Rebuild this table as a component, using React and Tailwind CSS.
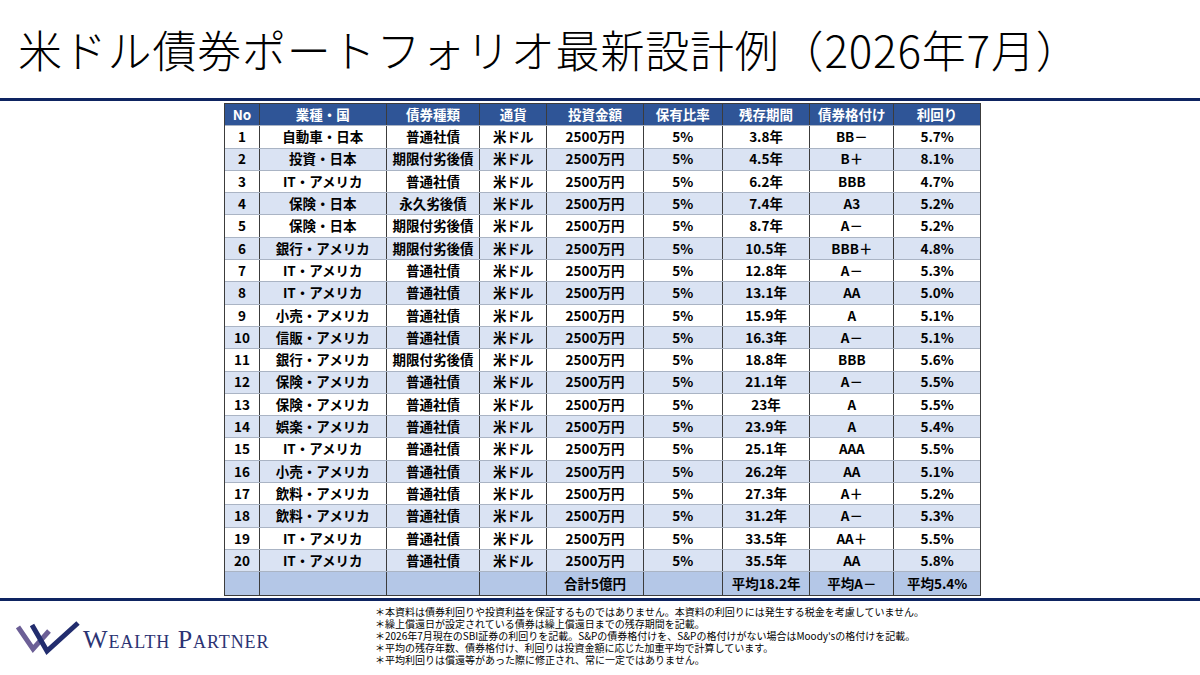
const rows = [
  ["1", "自動車・日本", "普通社債", "3.8年", "BB－", "5.7%"],
  ["2", "投資・日本", "期限付劣後債", "4.5年", "B＋", "8.1%"],
  ["3", "IT・アメリカ", "普通社債", "6.2年", "BBB", "4.7%"],
  ["4", "保険・日本", "永久劣後債", "7.4年", "A3", "5.2%"],
  ["5", "保険・日本", "期限付劣後債", "8.7年", "A－", "5.2%"],
  ["6", "銀行・アメリカ", "期限付劣後債", "10.5年", "BBB＋", "4.8%"],
  ["7", "IT・アメリカ", "普通社債", "12.8年", "A－", "5.3%"],
  ["8", "IT・アメリカ", "普通社債", "13.1年", "AA", "5.0%"],
  ["9", "小売・アメリカ", "普通社債", "15.9年", "A", "5.1%"],
  ["10", "信販・アメリカ", "普通社債", "16.3年", "A－", "5.1%"],
  ["11", "銀行・アメリカ", "期限付劣後債", "18.8年", "BBB", "5.6%"],
  ["12", "保険・アメリカ", "普通社債", "21.1年", "A－", "5.5%"],
  ["13", "保険・アメリカ", "普通社債", "23年", "A", "5.5%"],
  ["14", "娯楽・アメリカ", "普通社債", "23.9年", "A", "5.4%"],
  ["15", "IT・アメリカ", "普通社債", "25.1年", "AAA", "5.5%"],
  ["16", "小売・アメリカ", "普通社債", "26.2年", "AA", "5.1%"],
  ["17", "飲料・アメリカ", "普通社債", "27.3年", "A＋", "5.2%"],
  ["18", "飲料・アメリカ", "普通社債", "31.2年", "A－", "5.3%"],
  ["19", "IT・アメリカ", "普通社債", "33.5年", "AA＋", "5.5%"],
  ["20", "IT・アメリカ", "普通社債", "35.5年", "AA", "5.8%"],
];

const widths = ["w-[35px]", "w-[127px]", "w-[94px]", "w-[67px]", "w-[97px]", "w-[79px]", "w-[88px]", "w-[84px]", "w-[86px]"];
const heads = ["No", "業種・国", "債券種類", "通貨", "投資金額", "保有比率", "残存期間", "債券格付け", "利回り"];

const notes = [
  "＊本資料は債券利回りや投資利益を保証するものではありません。本資料の利回りには発生する税金を考慮していません。",
  "＊繰上償還日が設定されている債券は繰上償還日までの残存期間を記載。",
  "＊2026年7月現在のSBI証券の利回りを記載。S&Pの債券格付けを、S&Pの格付けがない場合はMoody'sの格付けを記載。",
  "＊平均の残存年数、債券格付け、利回りは投資金額に応じた加重平均で計算しています。",
  "＊平均利回りは償還等があった際に修正され、常に一定ではありません。",
];

function Row({ cells, className }) {
  return (
    <div className={`flex h-[22.3px] border-b border-[#aab4c4] ${className}`}>
      {cells.map((c, i) => (
        <div
          key={i}
          className={`${widths[i]} flex items-center justify-center ${i < cells.length - 1 ? "border-r border-[#3c3c3c]" : ""}`}
        >
          {c}
        </div>
      ))}
    </div>
  );
}

function Logo() {
  return (
    <div className="flex items-center gap-[3px]">
      <svg width="64" height="34" viewBox="0 0 64 34">
        <polyline points="2,6 17,28 33,10" fill="none" stroke="#6c5f96" strokeWidth="5" strokeLinejoin="miter" />
        <polyline points="16,4 31,30 62,2" fill="none" stroke="#222d6e" strokeWidth="5" strokeLinejoin="miter" />
      </svg>
      <div className="text-[#2c3373] text-[26px] leading-none tracking-[0.9px] mt-[4px]" style={{ fontFamily: '"Liberation Serif", serif', fontVariant: "small-caps" }}>
        Wealth Partner
      </div>
    </div>
  );
}

export default function App() {
  return (
    <div className="w-[1200px] h-[675px] bg-white overflow-hidden" style={{ fontFamily: '"Noto Sans CJK JP", "Noto Sans", sans-serif' }}>
      <div className="h-[98px] flex items-center pl-[18px]">
        <h1 className="text-[44px] font-light text-black tracking-[0.8px]">米ドル債券ポートフォリオ最新設計例（2026年7月）</h1>
      </div>
      <div className="h-[3px] bg-[#0e2461]" />
      <div className="pt-[2px] pl-[224px] h-[497px]">
        <div className="w-[757px] border border-[#3c3c3c] text-[13.5px] font-bold text-black leading-none">
          <Row cells={heads} className="bg-[#2f5597] text-white" />
          {rows.map((r, i) => (
            <Row
              key={r[0]}
              cells={[r[0], r[1], r[2], "米ドル", "2500万円", "5%", r[3], r[4], r[5]]}
              className={i % 2 === 0 ? "bg-white" : "bg-[#dae3f3]"}
            />
          ))}
          <Row
            cells={["", "", "", "", "合計5億円", "", "平均18.2年", "平均A－", "平均5.4%"]}
            className="bg-[#b4c7e7] border-b-0"
          />
        </div>
      </div>
      <div className="h-[3px] bg-[#0e2461]" />
      <div className="flex">
        <div className="w-[375px] pl-[16px] pt-[20px]">
          <Logo />
        </div>
        <div className="pt-[5px] text-[10px] leading-[12px] text-black">
          {notes.map((n) => (
            <div key={n} className="h-[12px]">{n}</div>
          ))}
        </div>
      </div>
    </div>
  );
}
